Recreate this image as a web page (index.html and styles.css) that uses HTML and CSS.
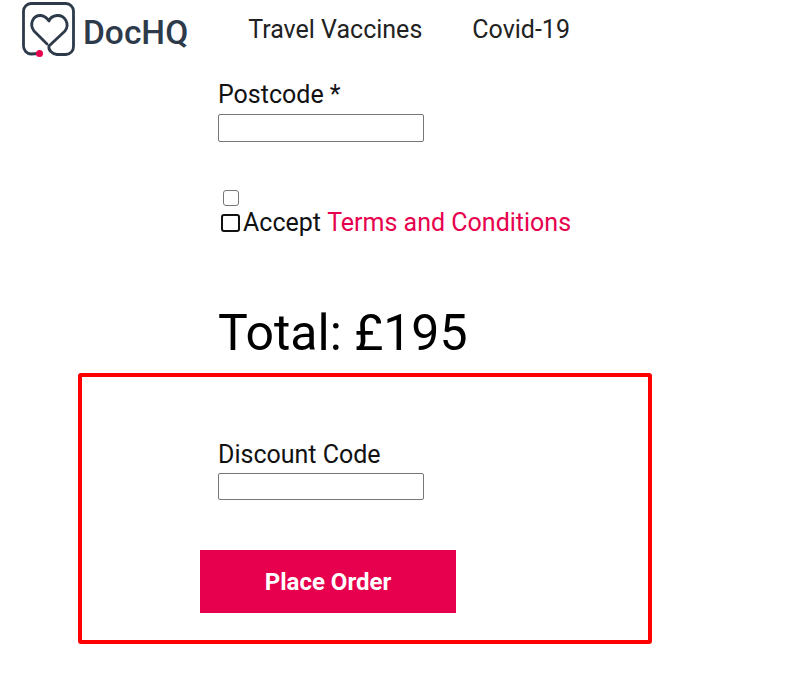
FILE: index.html
```html
<!DOCTYPE html>
<html lang="en">
<head>
<meta charset="utf-8">
<title>DocHQ</title>
<link rel="stylesheet" href="styles.css">
</head>
<body>
<header class="header">
  <a class="logo" href="#">
    <svg class="logo-mark" width="54" height="58" viewBox="22 0 54 58" fill="none" stroke="#2d3a4a" stroke-width="2.800" stroke-linecap="round" stroke-linejoin="round">
      <path d="M39 53.500L31 54A8 8 0 0 1 23.500 46V11A8 8 0 0 1 31 3.500H66A8 8 0 0 1 73.500 11V46A8 8 0 0 1 66 54.500H57C52 54 48 50 49 46L65 31C70 24 65 15 57 15.500C53 16 50 18 49 21C47 18 44 16 41 15.500C33 15 29 24 34 31L47 44"/>
      <circle cx="39.500" cy="53.500" r="3.500" fill="#e6004d" stroke="none"/>
    </svg>
    <span class="logo-text">DocHQ</span>
  </a>
  <nav class="nav">
    <a href="#">Travel Vaccines</a>
    <a href="#">Covid-19</a>
  </nav>
</header>
<main class="main">
  <form class="form">
    <div class="field field-postcode">
      <label for="postcode">Postcode *</label>
      <input id="postcode" type="text">
    </div>
    <div class="terms">
      <input class="native-check" type="checkbox">
      <div class="terms-line"><span class="box"></span>Accept <a href="#">Terms and Conditions</a></div>
    </div>
    <h1 class="total">Total: £195</h1>
    <div class="field field-discount">
      <label for="discount">Discount Code</label>
      <input id="discount" type="text">
    </div>
    <button class="order" type="button">Place Order</button>
  </form>
</main>
<div class="highlight"></div>
</body>
</html>
```
FILE: styles.css
```css
* { box-sizing: border-box; }
html, body { margin: 0; padding: 0; }
body {
  background: #fff;
  color: #111;
  font-family: Roboto, "Liberation Sans", sans-serif;
  height: 676px;
  overflow: hidden;
  position: relative;
}
a { text-decoration: none; color: inherit; }
.header {
  display: flex;
  align-items: center;
  height: 58px;
  padding-left: 22px;
}
.logo { display: flex; align-items: center; }
.logo-text {
  margin-left: 7px;
  margin-top: 6px;
  font-size: 33.500px;
  font-weight: 500;
  color: #2d3a4a;
}
.nav { display: flex; gap: 50px; margin-left: 60px; font-size: 25px; color: #222; }
.main { padding-left: 200px; }
.form { display: flex; flex-direction: column; align-items: flex-start; }
.field { display: flex; flex-direction: column; padding-left: 18px; }
.field label { font-size: 25px; line-height: 28px; }
.field input {
  width: 206px;
  height: 28px;
  margin: 5px 0 0;
  border: 1px solid #767676;
  border-radius: 2px;
  padding: 0;
  background: #fff;
}
.field-postcode { margin-top: 23px; }
.terms { margin-top: 48px; padding-left: 18px; }
.native-check { display: block; width: 16px; height: 16px; margin: 0 0 0 5px; appearance: none; border: 1px solid #767676; border-radius: 3px; background: #fff; }
.terms-line { display: flex; align-items: center; font-size: 25px; line-height: 28px; margin-top: 3px; white-space: pre; }
.terms-line a { color: #e6004d; }
.box {
  width: 19px;
  height: 18px;
  margin: 0 3px 0 3px;
  border: 2px solid #111;
  border-radius: 3px;
}
.total {
  margin: 66px 0 0;
  padding-left: 18px;
  font-size: 50px;
  font-weight: 400;
  line-height: 60px;
  color: #000;
}
.field-discount { margin-top: 78px; }
.field-discount input { height: 27px; margin-top: 4px; }
.order {
  width: 256px;
  height: 63px;
  margin-top: 50px;
  border: 0;
  background: #e6004d;
  color: #fff;
  font-family: inherit;
  font-size: 24px;
  font-weight: 700;
}
.highlight {
  position: absolute;
  left: 78px;
  top: 373px;
  width: 574px;
  height: 271px;
  border: 4px solid #f00;
  border-radius: 3px;
  pointer-events: none;
}
```
